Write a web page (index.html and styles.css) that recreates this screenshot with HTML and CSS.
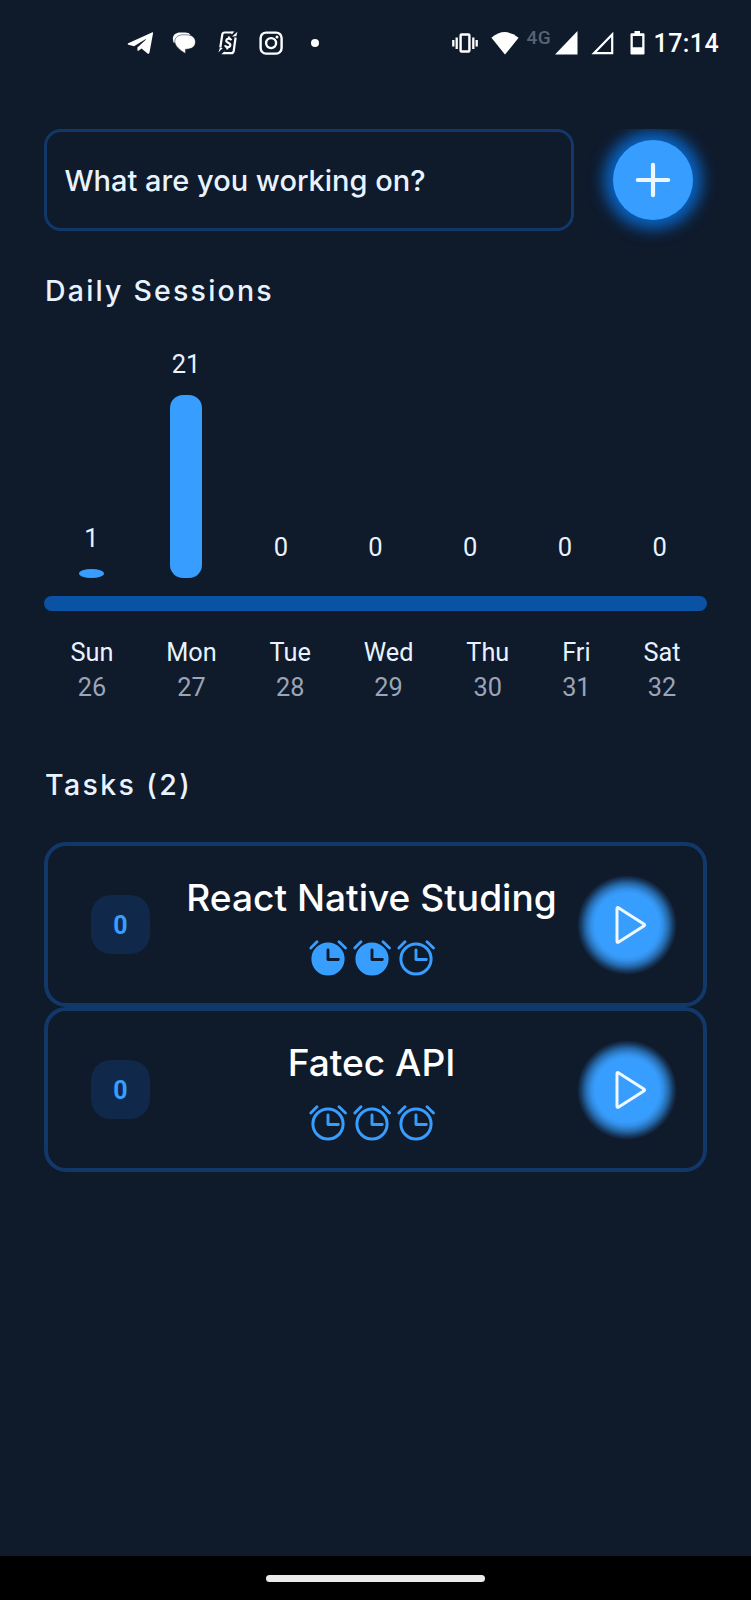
FILE: index.html
```html
<!DOCTYPE html>
<html lang="en">
<head>
<meta charset="utf-8">
<title>Focus sessions</title>
<link rel="stylesheet" href="styles.css">
</head>
<body>
<svg width="0" height="0" class="defs" aria-hidden="true">
  <symbol id="clock" viewBox="0 0 40 40">
    <circle class="face" cx="20" cy="22" r="15.100" stroke-width="3"/>
    <path class="bells" d="M2.800 11L9 4.800M31 4.800l6.500 6.200" stroke-width="2.900" stroke-linecap="round" fill="none"/>
    <path class="hands" d="M20 13v9.500h10.300" stroke-width="2.900" stroke-linecap="round" stroke-linejoin="round" fill="none"/>
  </symbol>
  <symbol id="play" viewBox="0 0 36 40">
    <path d="M4 3.800Q4 1.900 5.700 2.900L30.800 19Q32.300 20 30.800 21L5.700 37Q4 38 4 36.200Z" fill="none" stroke="#f1f8ff" stroke-width="3" stroke-linejoin="round"/>
  </symbol>
</svg>
<header class="status">
  <div class="notifications">
    <svg width="26" height="24" viewBox="0 0 26 24"><path d="M25.500 1.200L1.200 12.300Q0 13.100 1.400 13.700L7 15.200 18.500 8.300Q19.500 7.900 18.800 8.700L10.400 16.500 10.500 20Q12 19.800 14.500 17.600L20.500 22.500Q22 23.300 22.500 21.500L26 2.500Q26.200 .900 25.500 1.200Z" fill="#fff"/></svg>
    <svg width="24" height="24" viewBox="0 0 24 24"><path d="M1.800 12C-1 5 3 1.700 8 1.600H13Q17 1.700 18.500 3.800" fill="#fff"/><path d="M11 3.800H14C20 3.800 23.400 6.500 23.400 11S20 18 14.500 18.200H13.500V22.600C8 19 2.800 15 2.800 10.400C2.800 6 7 3.800 11 3.800Z" fill="#fff" stroke="#0f1a2b" stroke-width=".500"/></svg>
    <svg width="20" height="24" viewBox="0 0 20 24"><path d="M2.300 16.500L4.300 3.500Q4.700 1.500 6.600 1.500H14.500M17.600 6.500L15.700 20Q15.300 22.200 13.300 22.200H6" stroke="#fff" stroke-width="2.200" fill="none"/><path d="M19.500 .700L14 5.500L18.300 5.200M.300 21.500L4.800 17L2 16.700M13.500 .600H16.500L13.500 3.400ZM6.500 20.300V23.200H3.300Z" fill="#fff"/><path d="M13.300 9.300Q12.500 7.600 10.600 7.700C8 7.800 7.500 10.500 9.400 11.300C11.500 12.200 13 12.700 12.200 14.800C11.500 16.600 7.700 16.600 7 14.200M11.200 5.500L10.900 7.700M9.500 16L9.200 18.300" fill="none" stroke="#fff" stroke-width="2.200"/></svg>
    <svg width="24" height="24" viewBox="0 0 24 24"><rect x="1.600" y="1.600" width="21" height="21" rx="5.500" fill="none" stroke="#fff" stroke-width="2.400"/><circle cx="12.100" cy="12.100" r="5" fill="none" stroke="#fff" stroke-width="2.400"/><circle cx="18" cy="6" r="1.500" fill="#fff"/></svg>
    <span class="more"></span>
  </div>
  <div class="system">
    <svg width="26" height="22" viewBox="0 0 26 22"><rect x="8.600" y="2.500" width="8.800" height="17" rx="1" fill="none" stroke="#fff" stroke-width="2.400"/><path d="M1.300 8v6.500M4.700 5.500v11.500M21.300 5.500v11.500M24.700 8v6.500" stroke="#fff" stroke-width="2.300"/></svg>
    <svg class="wifi" width="28" height="24" viewBox="0 0 28 24"><path d="M.400 6.800Q13.700-4.600 27.600 6.800L14 23.600Z" fill="#fff"/></svg>
    <span class="network">4G</span>
    <svg class="signal" width="23" height="24" viewBox="0 0 23 24"><path d="M22.500 0V23.500H0Z" fill="#fff"/></svg>
    <svg class="signal2" width="23" height="24" viewBox="0 0 23 24"><path d="M21.200 3.500V22.200H3Z" fill="none" stroke="#fff" stroke-width="2.200"/></svg>
    <svg class="battery" width="15" height="24" viewBox="0 0 15 24"><path fill-rule="evenodd" d="M4.500 0h5.500v2.200h3.500q1 0 1 1V22.500q0 1-1 1h-12q-1 0-1-1V3.200q0-1 1-1h3ZM2.800 5V16.200H12.200V5Z" fill="#fff"/></svg>
    <time>17:14</time>
  </div>
</header>
<main class="screen">
  <form class="composer">
    <div class="field"><span class="placeholder">What are you working on?</span></div>
    <div class="glow-clip">
      <button class="add" type="button" aria-label="Add task"><svg width="36" height="36" viewBox="0 0 36 36"><path d="M18 2.800v30.400M2.800 18h30.400" stroke="#ecf6ff" stroke-width="4.200" stroke-linecap="round"/></svg></button>
    </div>
  </form>
  <h2 class="daily">Daily Sessions</h2>
  <section class="chart">
    <div class="columns">
      <div class="column"><span class="count">1</span><i class="bar small"></i></div>
      <div class="column"><span class="count">21</span><i class="bar"></i></div>
      <div class="column"><span class="count">0</span></div>
      <div class="column"><span class="count">0</span></div>
      <div class="column"><span class="count">0</span></div>
      <div class="column"><span class="count">0</span></div>
      <div class="column"><span class="count">0</span></div>
    </div>
    <div class="axis"></div>
    <div class="days">
      <div>Sun<span>26</span></div>
      <div>Mon<span>27</span></div>
      <div>Tue<span>28</span></div>
      <div>Wed<span>29</span></div>
      <div>Thu<span>30</span></div>
      <div>Fri<span>31</span></div>
      <div>Sat<span>32</span></div>
    </div>
  </section>
  <h2 class="tasks-title">Tasks (2)</h2>
  <section class="tasks">
    <article class="task">
      <span class="badge">0</span>
      <div class="info">
        <h3>React Native Studing</h3>
        <div class="clocks"><svg class="clock done"><use href="#clock"/></svg><svg class="clock done"><use href="#clock"/></svg><svg class="clock"><use href="#clock"/></svg></div>
      </div>
      <button class="play" type="button" aria-label="Start"><svg width="36" height="40"><use href="#play"/></svg></button>
    </article>
    <article class="task">
      <span class="badge">0</span>
      <div class="info">
        <h3>Fatec API</h3>
        <div class="clocks"><svg class="clock"><use href="#clock"/></svg><svg class="clock"><use href="#clock"/></svg><svg class="clock"><use href="#clock"/></svg></div>
      </div>
      <button class="play" type="button" aria-label="Start"><svg width="36" height="40"><use href="#play"/></svg></button>
    </article>
  </section>
</main>
<footer class="navbar"><span class="pill"></span></footer>
</body>
</html>
```
FILE: styles.css
```css
* { box-sizing: border-box; }
body {
  margin: 0;
  width: 751px;
  height: 1600px;
  display: flex;
  flex-direction: column;
  background: #0f1a2b;
  color: #e8f3ff;
  font-family: Roboto, sans-serif;
  overflow: hidden;
}
svg { display: block; flex: none; }
.defs { position: absolute; }
button { border: 0; padding: 0; }
h2, h3 { margin: 0; font-family: Inter, sans-serif; font-weight: 500; white-space: nowrap; }

/* Status bar */
.status {
  height: 85px;
  flex: none;
  display: flex;
  justify-content: space-between;
  padding: 0 32px 0 127px;
  color: #fff;
}
.notifications, .system { display: flex; align-items: center; }
.notifications { gap: 21px; }
.notifications svg:nth-child(2) { margin-left: -2px; }
.notifications svg:nth-child(3) { margin-left: 1px; }
.more { width: 8px; height: 8px; border-radius: 50%; background: #fff; margin-left: 7px; }
.wifi { margin-left: 13px; }
.network {
  width: 26px;
  margin: 0 2px 9px 8px;
  font: 500 19px/20px Roboto, sans-serif;
  letter-spacing: .4px;
  color: #596271;
}
.signal2 { margin-left: 13px; }
.battery { margin-left: 16px; }
.system time { margin: 2px 0 0 9px; font: 500 25px/30px Roboto, sans-serif; letter-spacing: .4px; }

.screen { flex: 1; padding: 44px 44px 0; }

/* New task */
.composer { display: flex; height: 102px; }
.field {
  flex: none;
  width: 530px;
  padding: 2px 0 0 17.5px;
  display: flex;
  align-items: center;
  border: 3.5px solid #12386a;
  border-radius: 17px;
}
.placeholder { font: 500 29px/40px Inter, sans-serif; white-space: nowrap; }
.glow-clip { flex: none; margin-left: 14px; width: 130px; height: 124px; padding: 11px 0 0 24.5px; overflow: hidden; }
.add {
  width: 80px;
  height: 80px;
  display: grid;
  place-items: center;
  border-radius: 50%;
  background: #379eff;
  box-shadow: 0 0 15px 9px #0a63c2;
}

.daily { margin-top: 40px; font-size: 28.5px; line-height: 40px; letter-spacing: 2.2px; padding-left: 1px; }

/* Weekly chart */
.chart { margin-top: 37px; }
.columns { display: flex; height: 230px; }
.column { flex: 1; display: flex; flex-direction: column; justify-content: flex-end; align-items: center; }
.count { font-size: 25.5px; line-height: 30px; padding-bottom: 16px; }
.bar { display: block; width: 32px; height: 183px; border-radius: 13px; background: #379eff; }
.bar.small { width: 25px; height: 9px; border-radius: 50%; }
.axis { width: 663px; height: 15px; margin-top: 18px; border-radius: 8px; background: #0a53a4; }
.days { display: flex; justify-content: space-around; margin-top: 24px; font-size: 25.3px; line-height: 35px; text-align: center; }
.days span { display: block; color: #9aa5b8; }

.tasks-title { margin-top: 60px; font-size: 28.5px; line-height: 40px; letter-spacing: 2.4px; padding-left: 1px; }

/* Task cards */
.tasks { margin-top: 37px; }
.task {
  width: 663px;
  height: 165px;
  display: flex;
  align-items: center;
  border: 4px solid #12386a;
  border-radius: 22px;
  padding: 0 26px 0 43px;
}
.badge {
  flex: none;
  width: 59px;
  height: 59px;
  border-radius: 20px;
  background: #10294a;
  color: #379eff;
  font: 700 25px/61px Roboto, sans-serif;
  text-align: center;
}
.info { flex: 1; height: 100%; padding: 29px 0 0 16px; display: flex; flex-direction: column; align-items: center; }
.info h3 { color: #fff; font-size: 37.1px; line-height: 46px; }
.clocks { display: flex; gap: 4px; margin-top: 16px; stroke: #379eff; }
.clock { width: 40px; height: 40px; fill: none; }
.clock.done { fill: #379eff; --hands: #0f1a2b; }
.hands { stroke: var(--hands, #379eff); }
.play {
  flex: none;
  width: 100px;
  height: 100px;
  display: grid;
  place-items: center;
  padding-left: 8px;
  border-radius: 50%;
  background: radial-gradient(circle closest-side, #379eff 64%, #338fe7 72%, #2569aa 83%, #173b62 92%, #0f1a2b 100%);
}

/* Gesture bar */
.navbar { flex: none; height: 44px; background: #000; display: flex; justify-content: center; padding-top: 19px; }
.pill { width: 219px; height: 7px; border-radius: 4px; background: #ebebeb; }
```
